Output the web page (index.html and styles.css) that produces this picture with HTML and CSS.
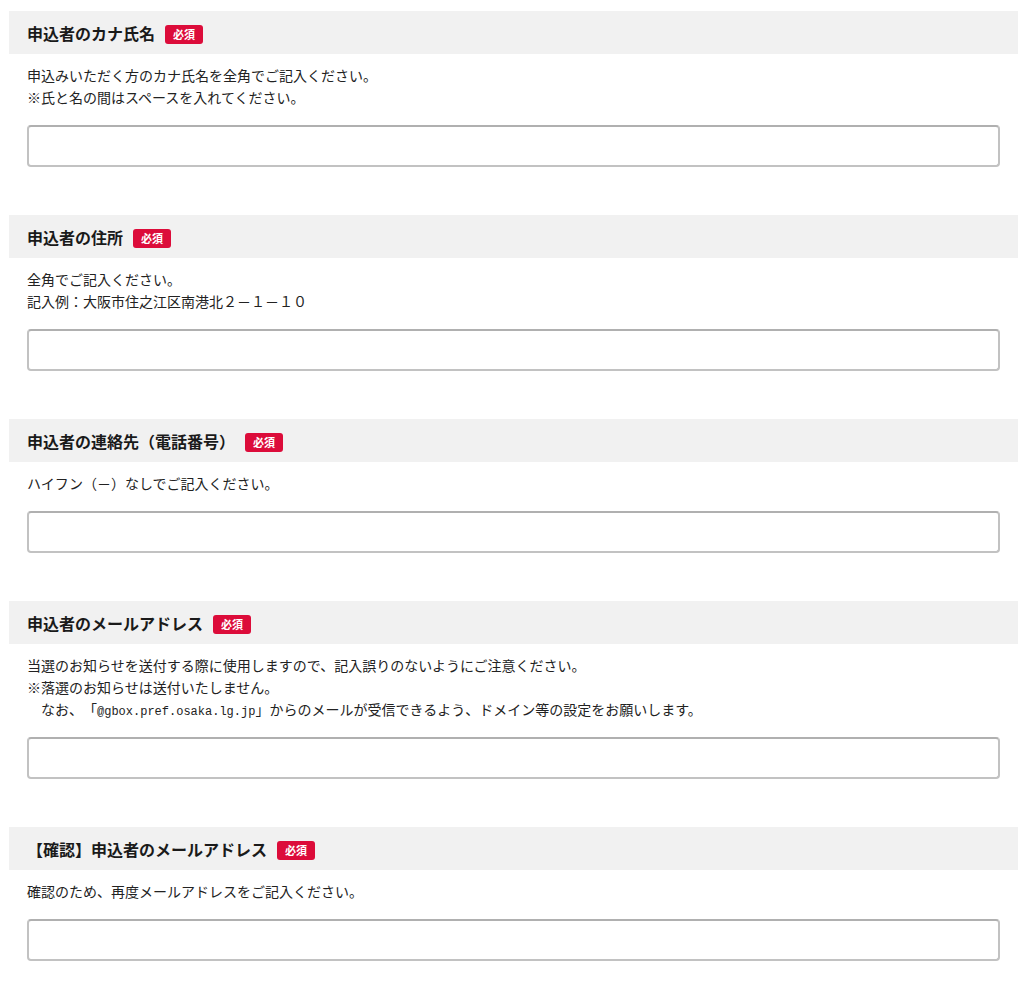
FILE: index.html
```html
<!DOCTYPE html>
<html lang="ja">
<head>
    <meta charset="UTF-8">
    <meta name="viewport" content="width=device-width, initial-scale=1.0">
    <title>申込者情報</title>
    <link rel="stylesheet" href="styles.css">
</head>
<body>
    <div class="form">
        <div class="field">
            <div class="field-head">
                <span class="field-title">申込者のカナ氏名</span>
                <span class="badge">必須</span>
            </div>
            <div class="field-body">
                <p class="desc">申込みいただく方のカナ氏名を全角でご記入ください。<br>※氏と名の間はスペースを入れてください。</p>
                <input type="text" class="text-input">
            </div>
        </div>

        <div class="field">
            <div class="field-head">
                <span class="field-title">申込者の住所</span>
                <span class="badge">必須</span>
            </div>
            <div class="field-body">
                <p class="desc">全角でご記入ください。<br>記入例：大阪市住之江区南港北２－１－１０</p>
                <input type="text" class="text-input">
            </div>
        </div>

        <div class="field">
            <div class="field-head">
                <span class="field-title">申込者の連絡先（電話番号）</span>
                <span class="badge">必須</span>
            </div>
            <div class="field-body">
                <p class="desc">ハイフン（－）なしでご記入ください。</p>
                <input type="tel" class="text-input">
            </div>
        </div>

        <div class="field">
            <div class="field-head">
                <span class="field-title">申込者のメールアドレス</span>
                <span class="badge">必須</span>
            </div>
            <div class="field-body">
                <p class="desc">当選のお知らせを送付する際に使用しますので、記入誤りのないようにご注意ください。<br>※落選のお知らせは送付いたしません。<br>　なお、「<span class="mono">@gbox.pref.osaka.lg.jp</span>」からのメールが受信できるよう、ドメイン等の設定をお願いします。</p>
                <input type="email" class="text-input">
            </div>
        </div>

        <div class="field">
            <div class="field-head">
                <span class="field-title">【確認】申込者のメールアドレス</span>
                <span class="badge">必須</span>
            </div>
            <div class="field-body">
                <p class="desc">確認のため、再度メールアドレスをご記入ください。</p>
                <input type="email" class="text-input">
            </div>
        </div>
    </div>
</body>
</html>
```

FILE: styles.css
```css
body {
    font-family: "Noto Sans CJK JP", "Noto Sans", sans-serif;
    text-spacing-trim: space-all;
    background: #fff;
    color: #222;
    margin: 0;
    padding: 11px 6px 0 9px;
}

.form {
    width: 1009px;
}

.field {
    margin-bottom: 48px;
}

.field-head {
    display: flex;
    align-items: center;
    gap: 10px;
    height: 43px;
    padding: 0 18px;
    background: #f1f1f1;
}

.field-title {
    font-size: 16px;
    font-weight: bold;
    color: #1a1a1a;
}

.badge {
    display: inline-block;
    height: 19px;
    line-height: 19px;
    padding: 0 8px;
    margin-top: 3px;
    font-size: 11px;
    font-weight: bold;
    color: #fff;
    background: #dc0c3a;
    border-radius: 3px;
}

.field-body {
    padding: 10px 18px 0;
}

.desc {
    margin: 0;
    font-size: 14px;
    line-height: 22px;
    color: #222;
}

.mono {
    font-family: "Liberation Mono", monospace;
    font-size: 12px;
    line-height: 1;
}

.text-input {
    display: block;
    box-sizing: border-box;
    width: 100%;
    height: 42px;
    margin-top: 17px;
    padding: 0 10px;
    font-size: 14px;
    border: 2px solid #c2c2c2;
    border-top-color: #b0b0b0;
    border-radius: 4px;
    background: #fff;
}
```
